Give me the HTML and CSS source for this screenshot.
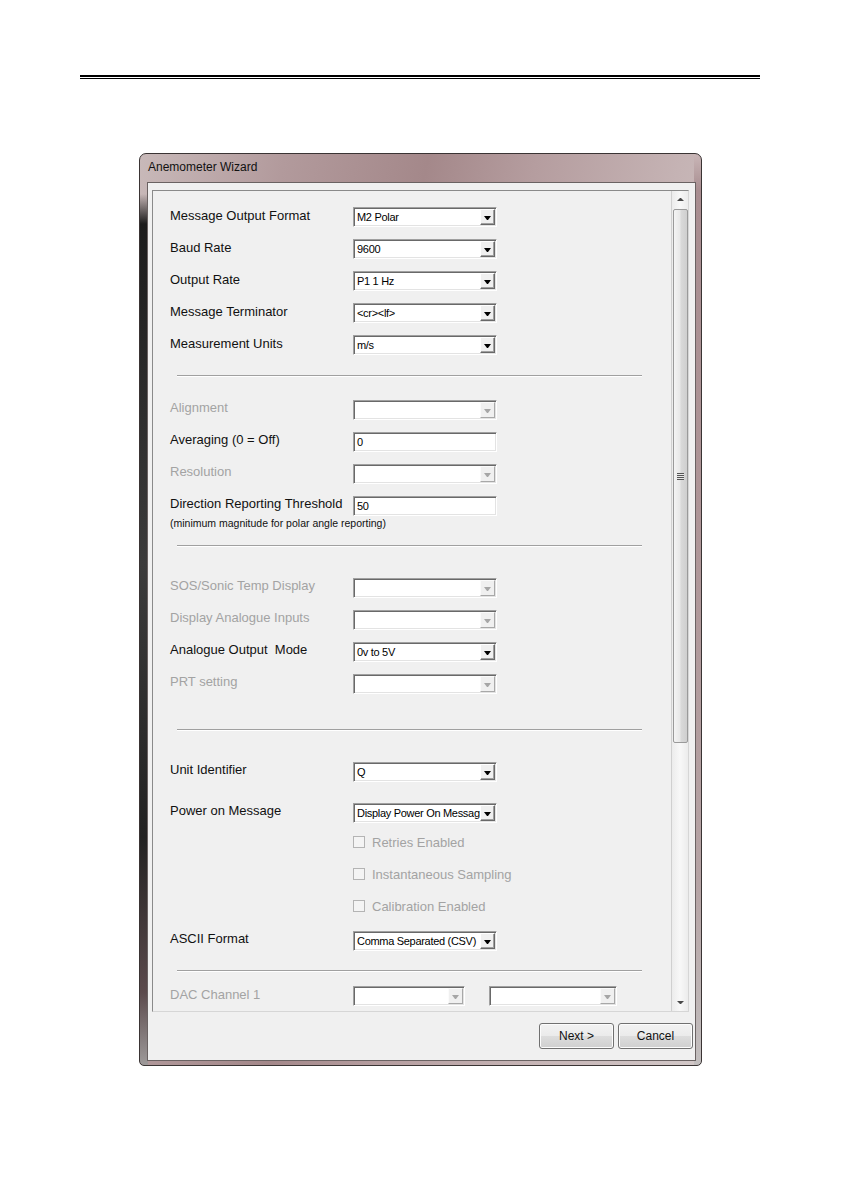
FILE: index.html
```html
<!DOCTYPE html>
<html lang="en">
<head>
  <meta charset="UTF-8" />
  <meta name="viewport" content="width=device-width, initial-scale=1.0" />
  <title>Anemometer Wizard</title>

  <link rel="stylesheet" href="styles.css">
</head>

<body>
  <div class="page-rule"></div>

  <div class="dialog">
    <div class="titlebar">Anemometer Wizard</div>

    <div class="client">
      <div class="panel">
        <div class="settings">

          <!-- Message settings -->
          <div class="group g1">
            <div class="row"><span class="label">Message Output Format</span><div class="combo"><span class="value">M2 Polar</span><span class="drop"></span></div></div>
            <div class="row"><span class="label">Baud Rate</span><div class="combo"><span class="value">9600</span><span class="drop"></span></div></div>
            <div class="row"><span class="label">Output Rate</span><div class="combo"><span class="value">P1 1 Hz</span><span class="drop"></span></div></div>
            <div class="row"><span class="label">Message Terminator</span><div class="combo"><span class="value">&lt;cr&gt;&lt;lf&gt;</span><span class="drop"></span></div></div>
            <div class="row"><span class="label">Measurement Units</span><div class="combo"><span class="value">m/s</span><span class="drop"></span></div></div>
          </div>

          <div class="sep s1"></div>

          <div class="group g2">
            <div class="row"><span class="label off">Alignment</span><div class="combo off"><span class="value"></span><span class="drop"></span></div></div>
            <div class="row"><span class="label">Averaging (0 = Off)</span><div class="combo edit"><span class="value">0</span></div></div>
            <div class="row"><span class="label off">Resolution</span><div class="combo off"><span class="value"></span><span class="drop"></span></div></div>
            <div class="row"><span class="label">Direction Reporting Threshold</span><div class="combo edit"><span class="value">50</span></div></div>
            <div class="note">(minimum magnitude for polar angle reporting)</div>
          </div>

          <div class="sep s2"></div>

          <div class="group g3">
            <div class="row"><span class="label off">SOS/Sonic Temp Display</span><div class="combo off"><span class="value"></span><span class="drop"></span></div></div>
            <div class="row"><span class="label off">Display Analogue Inputs</span><div class="combo off"><span class="value"></span><span class="drop"></span></div></div>
            <div class="row"><span class="label">Analogue Output&nbsp; Mode</span><div class="combo"><span class="value">0v to 5V</span><span class="drop"></span></div></div>
            <div class="row"><span class="label off">PRT setting</span><div class="combo off"><span class="value"></span><span class="drop"></span></div></div>
          </div>

          <div class="sep s3"></div>

          <div class="group g4">
            <div class="row"><span class="label">Unit Identifier</span><div class="combo"><span class="value">Q</span><span class="drop"></span></div></div>
            <div class="row r-power"><span class="label">Power on Message</span><div class="combo"><span class="value">Display Power On Message</span><span class="drop"></span></div></div>
            <div class="row check first"><span class="label"></span><span class="box"></span><span class="check-text">Retries Enabled</span></div>
            <div class="row check"><span class="label"></span><span class="box"></span><span class="check-text">Instantaneous Sampling</span></div>
            <div class="row check"><span class="label"></span><span class="box"></span><span class="check-text">Calibration Enabled</span></div>
            <div class="row r-ascii"><span class="label">ASCII Format</span><div class="combo"><span class="value">Comma Separated (CSV)</span><span class="drop"></span></div></div>
          </div>

          <div class="sep s4"></div>

          <div class="group g5">
            <div class="row"><span class="label off">DAC Channel 1</span><div class="combo off dac1"><span class="value"></span><span class="drop"></span></div><div class="combo off dac2"><span class="value"></span><span class="drop"></span></div></div>
          </div>
        </div>

        <div class="vscroll">
          <div class="sb-btn up"></div>
          <div class="sb-track">
            <div class="sb-thumb"><span class="grip"></span></div>
          </div>
          <div class="sb-btn down"></div>
        </div>
      </div>

      <div class="footer">
        <button class="btn">Next &gt;</button>
        <button class="btn">Cancel</button>
      </div>
    </div>
  </div>
</body>
</html>
```

FILE: styles.css
```css
* {
  box-sizing: border-box;
}

body {
  margin: 0;
  background: #fff;
  font-family: "Liberation Sans", Arial, sans-serif;
  color: #111;
}

.page-rule {
  margin: 75px 0 0 80px;
  width: 680px;
  height: 4px;
  border-top: 2px solid #000;
  border-bottom: 1px solid #000;
}

/* window frame */
.dialog {
  margin: 74px 0 0 139px;
  width: 563px;
  height: 913px;
  display: flex;
  flex-direction: column;
  padding: 0 5px 4px 7px;
  border: 1px solid #3a3434;
  border-radius: 7px 7px 5px 5px;
  background:
    linear-gradient(to bottom, transparent 40px, #1c1c1c 70px, #3b3b3b 45%, #222 75%, #5b4a4c 92%, #9e9a9a) left top / 8px 100% no-repeat,
    linear-gradient(to bottom, #c9b6b7 0, #a88d90 4%, #ae9597 40%, #b5a3a4 80%, #c2bebe 100%) right top / 7px 100% no-repeat,
    linear-gradient(100deg, #c8b9b9 0%, #b29a9c 20%, #a4888a 40%, #b59d9f 55%, #c5b3b4 75%, #d2c8c8 100%);
}

.titlebar {
  height: 28px;
  line-height: 26px;
  padding-left: 1px;
  font-size: 12px;
  color: #111;
}

.client {
  flex: 1;
  display: flex;
  flex-direction: column;
  background: #f0f0f0;
  border: 1px solid #6a6262;
}

/* scrolling settings area */
.panel {
  margin: 7px 0 0 4px;
  width: 537px;
  height: 822px;
  display: flex;
  border: 1px solid #8a8a8a;
  border-right-color: #d6d6d6;
  border-bottom-color: #d6d6d6;
}

.settings {
  flex: 1;
  overflow: hidden;
  padding: 16px 0 0 17px;
}

.row {
  display: flex;
  height: 20px;
  margin-top: 12px;
}

.group .row:first-child {
  margin-top: 0;
}

.label {
  width: 183px;
  flex: none;
  font-size: 13px;
  line-height: 17px;
  white-space: nowrap;
}

.g3 .label,
.g4 .label,
.g2 .label {
  line-height: 15px;
}

.label.off {
  color: #a3a3a3;
}

.combo {
  width: 144px;
  height: 20px;
  display: flex;
  background: #fff;
  border: 1px solid;
  border-color: #a0a0a0 #fff #fff #a0a0a0;
  box-shadow: inset 1px 1px 0 #696969, inset -1px -1px 0 #e3e3e3;
  padding: 1px 1px 1px 2px;
}

.combo .value {
  flex: 1;
  overflow: hidden;
  white-space: nowrap;
  font-size: 11px;
  letter-spacing: -0.3px;
  line-height: 15px;
  padding-top: 1px;
  padding-left: 1px;
  color: #000;
}

.drop {
  width: 15px;
  height: 16px;
  flex: none;
  display: flex;
  align-items: center;
  justify-content: center;
  background: #f0f0f0;
  border: 1px solid;
  border-color: #fff #696969 #696969 #fff;
  box-shadow: inset -1px -1px 0 #a0a0a0;
}

.drop::after {
  content: "";
  width: 1px;
  height: 0;
  margin-top: 1px;
  border-left: 3px solid transparent;
  border-right: 3px solid transparent;
  border-top: 4px solid #000;
}

.combo.off .drop::after {
  border-top-color: #a6a6a6;
}

.combo.off .drop {
  border-color: #fbfbfb #a8a8a8 #a8a8a8 #fbfbfb;
  box-shadow: none;
}

.combo.dac1 {
  width: 112px;
}

.combo.dac2 {
  width: 128px;
  margin-left: 24px;
}

.note {
  font-size: 10.5px;
  line-height: 14px;
  margin-top: 0;
}

/* etched separators */
.sep {
  margin-left: 7px;
  width: 465px;
  height: 2px;
  border-top: 1px solid #a0a0a0;
  border-bottom: 1px solid #fff;
}

.s1 { margin-top: 20px; }
.g2 { margin-top: 23px; }
.s2 { margin-top: 15px; }
.g3 { margin-top: 31px; }
.s3 { margin-top: 35px; }
.g4 { margin-top: 31px; }
.s4 { margin-top: 19px; }
.g5 { margin-top: 14px; }

.g4 .r-power { margin-top: 21px; }
.g4 .check { align-items: center; margin-top: 12px; }
.g4 .check.first { margin-top: 9px; }
.g4 .r-ascii { margin-top: 15px; }

.box {
  width: 12px;
  height: 12px;
  border: 1px solid #b4b4b4;
  background: #f4f4f4;
}

.check-text {
  margin-left: 7px;
  font-size: 13px;
  line-height: 15px;
  color: #a3a3a3;
}

/* vertical scrollbar */
.vscroll {
  width: 17px;
  display: flex;
  flex-direction: column;
  border-left: 1px solid #d0d0d0;
  background: linear-gradient(to right, #ececec, #f8f8f8 50%, #ececec);
}

.sb-btn {
  height: 17px;
  display: flex;
  align-items: center;
  justify-content: center;
}

.sb-btn::after {
  content: "";
  width: 1px;
  height: 0;
  border-left: 3px solid transparent;
  border-right: 3px solid transparent;
}

.sb-btn.up::after {
  border-bottom: 3px solid #4a4a4a;
}

.sb-btn.down::after {
  border-top: 3px solid #4a4a4a;
}

.sb-track {
  flex: 1;
}

.sb-thumb {
  margin: 1px 0 0 1px;
  width: 15px;
  height: 534px;
  display: flex;
  align-items: center;
  justify-content: center;
  border: 1px solid #9a9a9a;
  border-radius: 2px;
  background: linear-gradient(to right, #f4f4f4, #e8e8e8 45%, #d9d9d9 55%, #cfcfcf);
}

.grip {
  width: 7px;
  height: 7px;
  background: repeating-linear-gradient(to bottom, #555 0 1px, #e8e8e8 1px 2px);
}

/* dialog buttons */
.footer {
  display: flex;
  justify-content: flex-end;
  gap: 4px;
  padding: 11px 2px 0 0;
}

.btn {
  width: 75px;
  height: 26px;
  font-family: "Liberation Sans", Arial, sans-serif;
  font-size: 12px;
  color: #111;
  border: 1px solid #707070;
  border-radius: 3px;
  background: linear-gradient(to bottom, #f2f2f2, #ebebeb 50%, #dddddd 51%, #cfcfcf);
  box-shadow: inset 0 0 0 1px #fcfcfc;
  padding: 0;
}
```
